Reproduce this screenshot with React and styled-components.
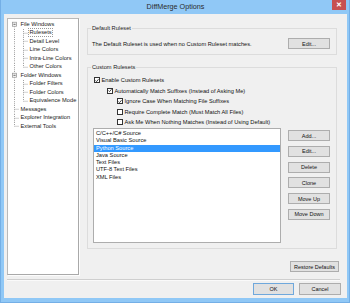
import React from "react";
import styled, { createGlobalStyle, css } from "styled-components";

const GlobalStyle = createGlobalStyle`
  html, body {
    margin: 0;
    padding: 0;
  }
  body {
    font-family: "Liberation Sans", Arial, sans-serif;
    background: #90c8f6;
  }
`;

const Window = styled.div`
  width: 350px;
  height: 303px;
  box-sizing: border-box;
  background: #90c8f6;
  border: 1px solid #74afe6;
  border-top: none;
  padding: 0 2px 4px 3px;
  display: flex;
  flex-direction: column;
`;

const TitleBar = styled.div`
  height: 14px;
  display: grid;
  grid-template-columns: 1fr auto 1fr;
  align-items: start;
`;

const Title = styled.span`
  grid-column: 2;
  font-size: 7.2px;
  line-height: 14px;
  color: #2b2b2b;
`;

const CloseButton = styled.span`
  grid-column: 3;
  justify-self: end;
  width: 14px;
  height: 10px;
  margin-right: 1px;
  background: #c75050;
  color: #fff;
  font-size: 7px;
  font-weight: bold;
  display: flex;
  align-items: center;
  justify-content: center;
`;

const Client = styled.div`
  flex: 1;
  background: #f0f0f0;
  padding: 4px 6px 3px 3px;
  display: flex;
  flex-direction: column;
  font-size: 5.7px;
  color: #111;
`;

const Main = styled.div`
  flex: 1;
  display: flex;
  gap: 8px;
  min-height: 0;
`;

const Tree = styled.div`
  width: 72px;
  box-sizing: border-box;
  background: #fff;
  border: 1px solid #b9b9b9;
  border-right-color: #a9a9a9;
  border-bottom-color: #a9a9a9;
  box-shadow: 1px 1px 0 #fdfdfd;
  padding: 1px 0 0 2px;
`;

const TreeRow = styled.div`
  height: 8.5px;
  display: flex;
  align-items: center;
`;

const TreeLabel = styled.span`
  margin-left: 1px;
  line-height: 7px;
  padding: 0 0.5px;
  white-space: nowrap;
  color: #1a1a1a;
  ${(p) =>
    p.$focused &&
    css`
      outline: 1px dotted #999;
      outline-offset: -0.5px;
    `}
`;

const RightPane = styled.div`
  flex: 1;
  display: flex;
  flex-direction: column;
`;

const Group = styled.fieldset`
  margin: ${(p) => p.$top}px 4px 0 0;
  padding: 0;
  border: 1px solid #dcdcdc;
  min-width: 0;
`;

const Legend = styled.legend`
  margin-left: 3px;
  padding: 0 1px;
  line-height: 8px;
  font-size: 5.7px;
  color: #1a1a1a;
`;

const InfoRow = styled.div`
  display: flex;
  align-items: center;
  justify-content: space-between;
  padding: 6px 6px 5px 4px;
`;

const CheckRow = styled.div`
  height: 10.5px;
  display: flex;
  align-items: center;
  gap: 1.5px;
  padding-left: ${(p) => p.$indent}px;
  white-space: nowrap;
`;

const Box = styled.span`
  width: 6px;
  height: 6px;
  box-sizing: border-box;
  border: 1px solid #333;
  background: #fff;
  display: flex;
  align-items: center;
  justify-content: center;
`;

const CheckList = styled.div`
  padding: 4px 0 0 0;
`;

const ListArea = styled.div`
  display: flex;
  gap: 7px;
  padding: 0.5px 6px 5px 5px;
`;

const List = styled.div`
  width: 188px;
  height: 115px;
  box-sizing: border-box;
  background: #fff;
  border: 1px solid #adadad;
  padding-top: 1px;
`;

const ListItem = styled.div`
  height: 7.3px;
  line-height: 7.3px;
  padding-left: 2px;
  white-space: nowrap;
  ${(p) =>
    p.$selected &&
    css`
      background: #3399ff;
      color: #fff;
    `}
`;

const ButtonColumn = styled.div`
  display: flex;
  flex-direction: column;
  gap: 4.8px;
  margin-top: 2px;
`;

const Button = styled.div`
  width: ${(p) => p.$w || 42}px;
  height: ${(p) => p.$h || 11}px;
  box-sizing: border-box;
  background: #e1e1e1;
  border: 1px solid ${(p) => (p.$default ? "#6fa8dc" : "#adadad")};
  display: flex;
  align-items: center;
  justify-content: center;
  font-size: 5.5px;
  color: #111;
  white-space: nowrap;
`;

const RestoreWrap = styled.div`
  display: flex;
  justify-content: flex-end;
  margin: 12px 2px 0 0;
`;

const Separator = styled.div`
  margin: 4px 1px 2px 0;
  height: 1px;
  background: #cfcfcf;
  border-bottom: 1px solid #fafafa;
`;

const Footer = styled.div`
  display: flex;
  justify-content: flex-end;
  gap: 5px;
`;

const LINE = "#a3a3a3";

// one column of the tree's guide lines
const Guide = ({ up, down, right, expander }) => (
  <svg width="9" height="8.5" viewBox="0 0 9 8.5" style={{ flex: "none" }}>
    {up && (
      <line x1="4.5" y1="0" x2="4.5" y2="4.25" stroke={LINE} strokeWidth="1" strokeDasharray="1 1" />
    )}
    {down && (
      <line x1="4.5" y1="4.25" x2="4.5" y2="8.5" stroke={LINE} strokeWidth="1" strokeDasharray="1 1" />
    )}
    {right && (
      <line x1="4.5" y1="4.25" x2="9" y2="4.25" stroke={LINE} strokeWidth="1" strokeDasharray="1 1" />
    )}
    {expander && (
      <>
        <rect x="2.5" y="2.25" width="4" height="4" fill="#fff" stroke="#9a9a9a" strokeWidth="0.8" />
        <line x1="3.4" y1="4.25" x2="5.6" y2="4.25" stroke="#333" strokeWidth="0.8" />
      </>
    )}
  </svg>
);

const tree = [
  { label: "File Windows", root: true, children: ["Rulesets", "Detail Level", "Line Colors", "Intra-Line Colors", "Other Colors"] },
  { label: "Folder Windows", root: true, children: ["Folder Filters", "Folder Colors", "Equivalence Mode"] },
  { label: "Messages" },
  { label: "Explorer Integration" },
  { label: "External Tools" },
];

const rulesets = [
  "C/C++/C# Source",
  "Visual Basic Source",
  "Python Source",
  "Java Source",
  "Text Files",
  "UTF-8 Text Files",
  "XML Files",
];

const checks = [
  { label: "Enable Custom Rulesets", indent: 6, checked: true },
  { label: "Automatically Match Suffixes (Instead of Asking Me)", indent: 19, checked: true },
  { label: "Ignore Case When Matching File Suffixes", indent: 29, checked: true },
  { label: "Require Complete Match (Must Match All Files)", indent: 29 },
  { label: "Ask Me When Nothing Matches (Instead of Using Default)", indent: 29 },
];

const CheckBox = ({ checked }) => (
  <Box>
    {checked && (
      <svg width="5" height="5" viewBox="0 0 5 5">
        <path d="M0.6 2.6 L1.9 3.9 L4.4 0.9" fill="none" stroke="#111" strokeWidth="1" />
      </svg>
    )}
  </Box>
);

const TreeView = () => {
  const rows = [];
  tree.forEach((node, i) => {
    const first = i === 0;
    const last = i === tree.length - 1;
    rows.push(
      <TreeRow key={node.label}>
        <Guide up={!first} down={!last} right={!node.root} expander={node.root} />
        <TreeLabel>{node.label}</TreeLabel>
      </TreeRow>
    );
    (node.children || []).forEach((child, j) => {
      const lastChild = j === node.children.length - 1;
      rows.push(
        <TreeRow key={child}>
          <Guide up down={!last} />
          <Guide up down={!lastChild} right />
          <TreeLabel $focused={child === "Rulesets"}>{child}</TreeLabel>
        </TreeRow>
      );
    });
  });
  return <Tree>{rows}</Tree>;
};

export default function App() {
  return (
    <>
      <GlobalStyle />
      <Window>
        <TitleBar>
          <Title>DiffMerge Options</Title>
          <CloseButton>✕</CloseButton>
        </TitleBar>
        <Client>
          <Main>
            <TreeView />
            <RightPane>
              <Group $top={6}>
                <Legend>Default Ruleset</Legend>
                <InfoRow>
                  <span>The Default Ruleset is used when no Custom Ruleset matches.</span>
                  <Button>Edit...</Button>
                </InfoRow>
              </Group>
              <Group $top={8}>
                <Legend>Custom Rulesets</Legend>
                <CheckList>
                  {checks.map((c) => (
                    <CheckRow key={c.label} $indent={c.indent}>
                      <CheckBox checked={c.checked} />
                      <span>{c.label}</span>
                    </CheckRow>
                  ))}
                </CheckList>
                <ListArea>
                  <List>
                    {rulesets.map((r) => (
                      <ListItem key={r} $selected={r === "Python Source"}>
                        {r}
                      </ListItem>
                    ))}
                  </List>
                  <ButtonColumn>
                    <Button>Add...</Button>
                    <Button>Edit...</Button>
                    <Button>Delete</Button>
                    <Button>Clone</Button>
                    <Button>Move Up</Button>
                    <Button>Move Down</Button>
                  </ButtonColumn>
                </ListArea>
              </Group>
              <RestoreWrap>
                <Button $w={49}>Restore Defaults</Button>
              </RestoreWrap>
            </RightPane>
          </Main>
          <Separator />
          <Footer>
            <Button $w={41} $h={12} $default>
              OK
            </Button>
            <Button $w={42} $h={12}>
              Cancel
            </Button>
          </Footer>
        </Client>
      </Window>
    </>
  );
}
